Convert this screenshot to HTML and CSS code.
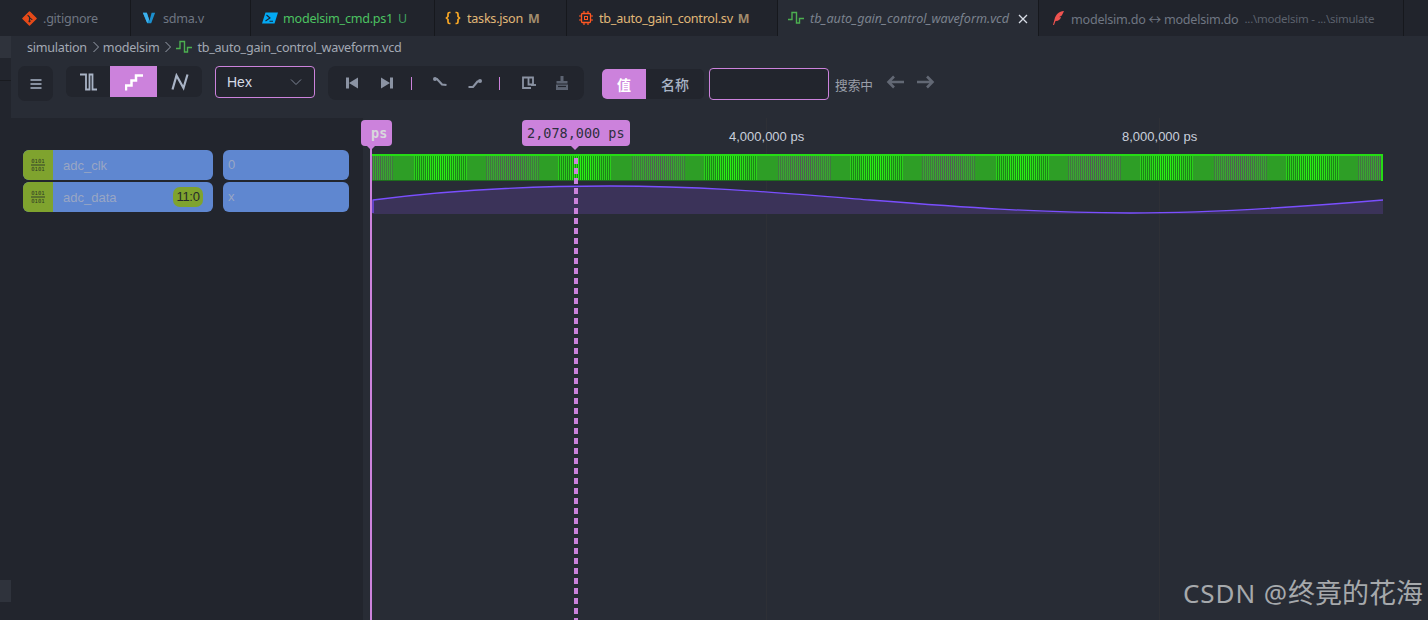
FILE: index.html
```html
<!DOCTYPE html>
<html lang="zh">
<head>
<meta charset="utf-8">
<title>tb_auto_gain_control_waveform.vcd</title>
<link rel="stylesheet" href="styles.css">
</head>
<body>
<nav class="tabs">
  <div class="tab tab-git">
    <svg class="ti" viewBox="0 0 16 16"><path d="M8 1 15 8 8 15 1 8Z" fill="#e64a19" stroke="#e64a19" stroke-linejoin="round" stroke-width="1.5"/><path d="M6 4.5 8 6.5V11M8 7l3 2.5" stroke="#23262e" stroke-width="1.2" fill="none"/><circle cx="8" cy="11" r="1.2" fill="#23262e"/></svg>
    <span class="tn dim">.gitignore</span>
  </div>
  <div class="tab tab-sdma">
    <svg class="ti" viewBox="0 0 16 16"><path d="M1 2H5.5L8.5 11 11 2H15L10.5 14H6Z" fill="#1b8fce"/><path d="M1 2H5.5L8 9.5 6 14Z" fill="#3cb0ec"/></svg>
    <span class="tn dim">sdma.v</span>
  </div>
  <div class="tab tab-ps">
    <svg class="ti" viewBox="0 0 16 16"><path d="M3.5 2.5H16L12.5 13.5H0Z" fill="#03a9f4"/><path d="M4.5 5 8 8 3.5 11M7.5 11.2H11" stroke="#1a2230" stroke-width="1.1" fill="none"/></svg>
    <span class="tn green">modelsim_cmd.ps1</span><span class="st st-u">U</span>
  </div>
  <div class="tab tab-json">
    <svg class="ti" viewBox="0 0 16 16"><path d="M5.5 2.5H4.5Q3 2.500 3 4V6.500L1.500 8 3 9.500V12Q3 13.500 4.500 13.500H5.500M10.500 2.500H11.500Q13 2.500 13 4V6.500L14.500 8 13 9.500V12Q13 13.500 11.500 13.500H10.500" fill="none" stroke="#f9a825" stroke-width="1.700"/></svg>
    <span class="tn yellow">tasks.json</span><span class="st">M</span>
  </div>
  <div class="tab tab-sv">
    <svg class="ti" viewBox="0 0 16 16"><rect x="3.5" y="3.5" width="9" height="9" rx="1" fill="none" stroke="#ff5722" stroke-width="1.3"/><rect x="6.5" y="6.5" width="3" height="3" fill="none" stroke="#ff5722"/><path d="M6 1v2M10 1v2M6 13v2M10 13v2M1 6h2M1 10h2M13 6h2M13 10h2" stroke="#ff5722" stroke-width="1.2"/></svg>
    <span class="tn yellow">tb_auto_gain_control.sv</span><span class="st">M</span>
  </div>
  <div class="tab tab-active">
    <svg class="ti" viewBox="0 0 16 16"><path d="M0 9.5H4V2.5H8.5V13H11.5V8.5H16" fill="none" stroke="#4caf50" stroke-width="1.4"/></svg>
    <span class="tn ital">tb_auto_gain_control_waveform.vcd</span>
    <svg class="close" viewBox="0 0 10 10"><path d="M1 1 9 9M9 1 1 9" stroke="#d8dde6" stroke-width="1.3"/></svg>
  </div>
  <div class="tab tab-do">
    <svg class="ti" viewBox="0 0 16 16"><path d="M14 1C9 1.500 5.500 4.500 4.500 9.500L3 15 4 15 5.500 11C9 11 10.500 9 11 7L9 7.200 11.800 5.500C12.500 4 13.500 2.500 14 1Z" fill="#ef5350"/></svg>
    <span class="tn dim">modelsim.do ↔ modelsim.do</span><span class="desc">...\modelsim - ...\simulate</span>
  </div>
</nav>

<div class="work">
  <aside class="rail">
    <div class="rail-item"></div>
    <div class="rail-line"></div>
    <div class="rail-item rail-end"></div>
  </aside>
  <main class="main">
    <div class="crumbs">
      <span>simulation</span>
      <svg class="chev" viewBox="0 0 8 12"><path d="M1.500 1 6.500 6 1.500 11" fill="none" stroke="#9aa1ad" stroke-width="1"/></svg>
      <span>modelsim</span>
      <svg class="chev" viewBox="0 0 8 12"><path d="M1.500 1 6.500 6 1.500 11" fill="none" stroke="#9aa1ad" stroke-width="1"/></svg>
      <svg class="ci" viewBox="0 0 16 16"><path d="M0 9.500H4V2.500H8.500V13H11.500V8.500H16" fill="none" stroke="#4caf50" stroke-width="1.400"/></svg>
      <span>tb_auto_gain_control_waveform.vcd</span>
    </div>

    <div class="toolbar">
      <button class="menu" type="button" aria-label="menu">
        <svg class="ic14" viewBox="0 0 14 14"><path d="M1.500 3H12.500M1.500 7H12.500M1.500 11H12.500" stroke="#a9b4c6" stroke-width="1.600"/></svg>
      </button>
      <div class="mode">
        <button class="mbtn m1" type="button" aria-label="digital">
          <svg class="ic18" viewBox="0 0 18 18"><path d="M1 1.500H7V16.500H10.500V1.500H13.500V16.500H18" fill="none" stroke="#a9b4c6" stroke-width="1.800"/></svg>
        </button>
        <button class="mbtn m2 on" type="button" aria-label="stepped">
          <svg class="ic18" viewBox="0 0 18 18"><path d="M1 17.500V12.500H6.500V7.500H11V2.500H18" fill="none" stroke="#fff" stroke-width="2.500"/></svg>
        </button>
        <button class="mbtn m3" type="button" aria-label="linear">
          <svg class="ic18" viewBox="0 0 18 18"><path d="M1.500 16.500 5.500 2.500 12.500 15 16.500 1.500" fill="none" stroke="#a9b4c6" stroke-width="2.200"/></svg>
        </button>
      </div>
      <div class="select">
        <span>Hex</span>
        <svg class="ic12" viewBox="0 0 12 12"><path d="M1 3.500 6 8.500 11 3.500" fill="none" stroke="#7d8595" stroke-width="1"/></svg>
      </div>
      <div class="tools">
        <svg class="ic14 t-a" viewBox="0 0 14 14"><path d="M1 1.500H4V12.500H1ZM13 1.500V12.500L4 7Z" fill="#8b93a3"/></svg>
        <svg class="ic14 t-b" viewBox="0 0 14 14"><path d="M13 1.500H10V12.500H13ZM1 1.500V12.500L10 7Z" fill="#8b93a3"/></svg>
        <span class="div d1"></span>
        <svg class="ic16 t-c" viewBox="0 0 16 16"><path d="M2.500 4 5 4 10 9.500 14.500 10" fill="none" stroke="#8b93a3" stroke-width="2.100"/><circle cx="3" cy="4" r="2" fill="#8b93a3"/></svg>
        <svg class="ic16 t-d" viewBox="0 0 16 16"><path d="M1.500 12 6 12 10.500 6.500 13 6" fill="none" stroke="#8b93a3" stroke-width="2.100"/><circle cx="13" cy="6" r="2" fill="#8b93a3"/></svg>
        <span class="div d2"></span>
        <svg class="ic16 t-e" viewBox="0 0 16 16"><path d="M10 13H2V2.500H12V9.500H7.500V3" fill="none" stroke="#8b93a3" stroke-width="1.800"/><path d="M10 10H15" stroke="#8b93a3" stroke-width="1.800"/></svg>
        <svg class="ic16 t-f" viewBox="0 0 16 16"><path d="M6.500 1H9.500V6H13.500V8.500H2.500V6H6.500Z" fill="#5d6472"/><path d="M2 9.500H14V15H2Z" fill="#5d6472"/><path d="M4 11.500H12" stroke="#22252d" stroke-width="1.200"/></svg>
      </div>
      <div class="seg">
        <button class="sbtn on" type="button">值</button>
        <button class="sbtn" type="button">名称</button>
      </div>
      <input class="search" type="text" aria-label="search">
      <span class="searching">搜索中</span>
      <svg class="arrow a-l" viewBox="0 0 18 14"><path d="M18 7H2.500M8 1.500 2.500 7 8 12.500" fill="none" stroke="#626874" stroke-width="2.600"/></svg>
      <svg class="arrow a-r" viewBox="0 0 18 14"><path d="M0 7H15.500M10 1.500 15.500 7 10 12.500" fill="none" stroke="#626874" stroke-width="2.600"/></svg>
    </div>

    <div class="viewer">
      <section class="signals">
        <div class="sig-row">
          <div class="sig-name">
            <span class="sig-type"><svg class="bits" viewBox="0 0 16 16"><text class="bit-t" x="8" y="6.200">0101</text><path d="M1 8H15" stroke="#33402a"/><text class="bit-t" x="8" y="14">0101</text></svg></span>
            <span class="sig-label">adc_clk</span>
          </div>
          <div class="sig-val">0</div>
        </div>
        <div class="sig-row">
          <div class="sig-name">
            <span class="sig-type"><svg class="bits" viewBox="0 0 16 16"><text class="bit-t" x="8" y="6.200">0101</text><path d="M1 8H15" stroke="#33402a"/><text class="bit-t" x="8" y="14">0101</text></svg></span>
            <span class="sig-label">adc_data</span>
            <span class="range">11:0</span>
          </div>
          <div class="sig-val">x</div>
        </div>
      </section>

      <section class="wave">
        <svg class="plot" viewBox="363 118 1065 502" aria-hidden="true">
          <defs>
            <g id="bs">
              <path class="gap" d="M1 13.500H53"/>
              <path class="hi lv1" d="M0 13.500H12M42 13.500H53"/>
              <path class="hi lv2" d="M12 13.500H20M34 13.500H42"/>
              <path class="hi" d="M20 13.500H34"/>
            </g>
            <g id="ds">
              <path class="gap2" d="M1 13.500H53"/>
              <path class="lo lv1" d="M0 13.500H12M42 13.500H53"/>
              <path class="lo lv2" d="M12 13.500H20M34 13.500H42"/>
              <path class="lo" d="M20 13.500H34"/>
            </g>
          </defs>
          <path class="grid" d="M766.500 118V620M1159.500 118V620"/>
          <rect class="clk-base" x="372" y="154" width="1011" height="27"/>
          <g transform="translate(0 154)">
            <use href="#ds" x="340"/>
            <use href="#bs" x="414"/><use href="#ds" x="486"/><use href="#bs" x="558"/><use href="#ds" x="632"/>
            <use href="#bs" x="704"/><use href="#ds" x="778"/><use href="#bs" x="850"/><use href="#ds" x="922"/>
            <use href="#bs" x="996"/><use href="#ds" x="1068"/><use href="#bs" x="1140"/><use href="#ds" x="1214"/>
            <use href="#bs" x="1286"/><use href="#ds" x="1358"/>
          </g>
          <rect class="clk-cover" x="1383" y="150" width="45" height="35"/>
          <rect class="clk-cover" x="330" y="150" width="42" height="35"/>
          <rect class="clk-top" x="372" y="154" width="1011" height="2"/>
          <rect class="clk-bot" x="372" y="180" width="1011" height="1"/>
          <rect class="clk-end" x="1381" y="155" width="2" height="26"/>
          <path class="data-fill" d="M372.500 200C450 190 530 186 610 186C700 186 770 192 870 200C960 207 1040 213 1130 213C1210 213 1300 207 1383 200V214H372.500Z"/>
          <path class="data-line" d="M373 213V200C450 190 530 186 610 186C700 186 770 192 870 200C960 207 1040 213 1130 213C1210 213 1300 207 1383 200"/>
          <rect class="base-cursor" x="370" y="146" width="2" height="474"/>
          <path class="cursor" d="M576 158V620"/>
        </svg>
        <span class="tick tick-4">4,000,000 ps</span>
        <span class="tick tick-8">8,000,000 ps</span>
        <div class="tip tip-zero">ps</div>
        <div class="tip tip-now">2,078,000 ps</div>
      </section>
    </div>
  </main>
</div>
<div class="mark">CSDN @<span class="mark-cjk">终竟的花海</span></div>
</body>
</html>
```

FILE: styles.css
```css
* { box-sizing: border-box; }
html, body { margin: 0; height: 100%; }
body {
  width: 1428px;
  height: 620px;
  overflow: hidden;
  display: flex;
  flex-direction: column;
  background: #22252d;
  font-family: "Noto Sans", "Noto Sans CJK SC", sans-serif;
  position: relative;
}
svg { display: block; flex: none; }
button { font: inherit; border: 0; padding: 0; margin: 0; }

/* tabs */
.tabs { display: flex; height: 36px; flex: none; background: #21242c; }
.tab {
  display: flex;
  align-items: center;
  height: 36px;
  padding-left: 11px;
  border-right: 1px solid #16181d;
  font-size: 12.6px;
  letter-spacing: -.25px;
  white-space: nowrap;
  flex: none;
}
.tab-git { width: 131px; padding-left: 22px; }
.tab-sdma { width: 120px; }
.tab-ps { width: 184px; }
.tab-json { width: 132px; padding-left: 10px; }
.tab-sv { width: 211px; }
.tab-active { width: 261px; padding-left: 10px; background: #282c35; position: relative; }
.tab-do { width: 365px; }
.ti { width: 16px; height: 16px; margin-right: 5px; }
.tab-git .ti { width: 15px; height: 15px; margin-right: 6px; }
.tab-sdma .ti { width: 14px; height: 14px; margin-right: 7px; }
.tab-json .ti { margin-right: 6px; }
.tab-active .ti { margin-right: 6px; }
.dim { color: #6f7682; }
.green { color: #4cc261; }
.yellow { color: #e0b878; }
.ital { color: #7b828e; font-style: italic; letter-spacing: 0; }
.st { margin-left: 5px; font-size: 12.5px; font-weight: 700; color: #a18c6c; }
.st-u { color: #3f9f5e; font-weight: 400; }
.close { width: 10px; height: 10px; position: absolute; left: 240px; top: 14px; }
.desc { margin-left: 6px; font-size: 11.5px; color: #5c626d; }

/* frame */
.work { display: flex; flex: 1; min-height: 0; }
.rail { width: 11px; flex: none; display: flex; flex-direction: column; background: #22252d; }
.rail-item { height: 22px; background: #2f333c; flex: none; }
.rail-line { height: 1px; margin-top: 22px; background: #191b20; flex: none; }
.rail-end { margin-top: auto; margin-bottom: 18px; }
.main { flex: 1; min-width: 0; display: flex; flex-direction: column; background: #282c35; }

/* breadcrumbs */
.crumbs {
  height: 22px;
  flex: none;
  padding-left: 16px;
  display: flex;
  align-items: center;
  font-size: 12.6px;
  letter-spacing: -.25px;
  color: #a3a9b4;
}
.chev { width: 8px; height: 12px; margin: 0 3px 0 5px; }
.ci { width: 16px; height: 16px; margin: 0 5px 0 1px; }

/* toolbar */
.toolbar { height: 60px; flex: none; padding: 8px 0 0 7px; display: flex; align-items: flex-start; }
.menu { width: 35px; height: 35px; border-radius: 7px; background: #22252d; display: flex; align-items: center; justify-content: center; }
.ic14 { width: 14px; height: 14px; }
.ic16 { width: 16px; height: 16px; }
.ic18 { width: 18px; height: 18px; }
.ic12 { width: 12px; height: 12px; }
.mode { margin-left: 13px; width: 136px; height: 31px; display: flex; background: #22252d; border-radius: 6px; overflow: hidden; }
.mbtn { background: none; display: flex; align-items: center; justify-content: center; }
.m1 { width: 44px; }
.m2 { width: 47px; }
.m3 { width: 45px; }
.on { background: #cc82dc; color: #fff; }
.select {
  margin-left: 13px;
  width: 100px;
  height: 32px;
  border: 1px solid #cc82dc;
  border-radius: 4px;
  background: #22252d;
  display: flex;
  align-items: center;
  justify-content: space-between;
  padding: 0 12px 0 11px;
  font-family: "Liberation Sans", sans-serif;
  font-size: 14px;
  color: #d5dbe6;
}
.tools { margin-left: 13px; width: 256px; height: 34px; background: #22252d; border-radius: 8px; display: flex; align-items: center; padding-left: 17px; }
.t-b { margin-left: 21px; }
.div { width: 1px; height: 13px; background: #cc82dc; flex: none; }
.d1 { margin-left: 17px; }
.t-c { margin-left: 20px; }
.t-d { margin-left: 19px; }
.d2 { margin-left: 16px; }
.t-e { margin-left: 21px; }
.t-f { margin-left: 17px; }
.seg { margin: 3px 0 0 18px; width: 102px; height: 30px; background: #22252d; border-radius: 5px; display: flex; overflow: hidden; }
.sbtn { width: 44px; height: 30px; background: none; color: #a9b4c6; font-family: "Noto Sans CJK SC", sans-serif; font-size: 14px; font-weight: 500; }
.sbtn.on { background: #cc82dc; color: #fff; font-weight: 700; }
.sbtn + .sbtn { width: 58px; }
.search { margin: 2px 0 0 5px; width: 120px; height: 32px; border: 1px solid #cc82dc; border-radius: 4px; background: #22252d; outline: none; }
.searching { margin: 10px 0 0 6px; font-family: "Noto Sans CJK SC", sans-serif; font-size: 12.7px; line-height: 18px; color: #9a9fa9; }
.arrow { width: 18px; height: 14px; margin: 9px 0 0 12px; }
.a-l { margin-left: 13px; }
.a-r { margin-left: 13px; }

/* viewer */
.viewer { flex: 1; min-height: 0; display: flex; }
.signals { width: 352px; flex: none; background: #22252d; padding: 32px 0 0 12px; display: flex; flex-direction: column; gap: 2px; }
.sig-row { display: flex; gap: 10px; height: 30px; }
.sig-name { width: 190px; height: 30px; display: flex; align-items: center; background: #5f87d0; border-radius: 6px; overflow: hidden; }
.sig-type { width: 30px; height: 30px; background: #7fa32e; display: flex; align-items: center; justify-content: center; flex: none; }
.bits { width: 16px; height: 16px; }
.bit-t { font-family: "DejaVu Sans Mono", monospace; font-size: 5.6px; fill: #2e3a25; text-anchor: middle; }
.sig-label { margin-left: 10px; flex: 1; font-family: "Liberation Sans", sans-serif; font-size: 13px; color: #99a6c4; }
.range { width: 30px; height: 20px; margin-right: 10px; border-radius: 7px; background: #7fa32e; color: #26292a; font-family: "Liberation Sans", sans-serif; font-size: 13px; line-height: 20px; text-align: center; letter-spacing: -.3px; }
.sig-val { width: 126px; height: 30px; padding-left: 5px; background: #5f87d0; border-radius: 6px; font-family: "Liberation Sans", sans-serif; font-size: 13px; line-height: 30px; color: #99a6c4; }

/* waveform canvas */
.wave { flex: 1; min-width: 0; position: relative; }
.plot { position: absolute; left: 0; top: 0; width: 1065px; height: 502px; }
.grid { stroke: #2e3036; stroke-width: 1; fill: none; }
.clk-base { fill: #2e9e26; }
.clk-cover { fill: #282c35; }
.clk-top { fill: #25dc14; }
.clk-bot { fill: #1d6e1c; }
.clk-end { fill: #25dc14; }
.gap, .gap2, .hi, .lo { fill: none; stroke-width: 27; stroke-dasharray: 1 1; shape-rendering: crispEdges; }
.gap { stroke: #1f8419; }
.gap2 { stroke: #38a630; }
.hi { stroke: #28f014; }
.lo { stroke: #4f5f52; }
.lv1 { opacity: .6; }
.lv2 { opacity: .85; }
.data-fill { fill: #3b3359; }
.data-line { fill: none; stroke: #7a4fff; stroke-width: 1.300; }
.base-cursor { fill: #cc82dc; }
.cursor { fill: none; stroke: #cc82dc; stroke-width: 4; stroke-dasharray: 6 4; }
.tick { position: absolute; top: 11px; font-family: "Liberation Sans", sans-serif; font-size: 13px; line-height: 16px; color: #c8d0dc; white-space: nowrap; }
.tick-4 { left: 366px; }
.tick-8 { left: 759px; }
.tip {
  position: absolute;
  top: 2px;
  height: 26px;
  background: #cc82dc;
  border-radius: 4px;
  font-family: "DejaVu Sans Mono", monospace;
  font-size: 13.5px;
  line-height: 26px;
  white-space: nowrap;
}
.tip::after {
  content: "";
  position: absolute;
  top: 26px;
  border: 4px solid transparent;
  border-top-color: #cc82dc;
  border-bottom-width: 0;
}
.tip-zero { left: -2px; width: 31px; padding-left: 10px; color: #d8d8dc; font-weight: 700; }
.tip-zero::after { left: 6px; }
.tip-now { left: 159px; width: 108px; padding-left: 5px; color: #2d3040; }
.tip-now::after { left: 49px; }

.mark {
  position: absolute;
  right: 5px;
  top: 575px;
  font-family: "Noto Sans", "Noto Sans CJK SC", sans-serif;
  font-size: 26px;
  line-height: 34px;
  letter-spacing: .9px;
  color: #a6a9ac;
  white-space: nowrap;
}
.mark-cjk { font-family: "Noto Sans CJK SC", sans-serif; font-size: 27px; letter-spacing: 0; }
```
